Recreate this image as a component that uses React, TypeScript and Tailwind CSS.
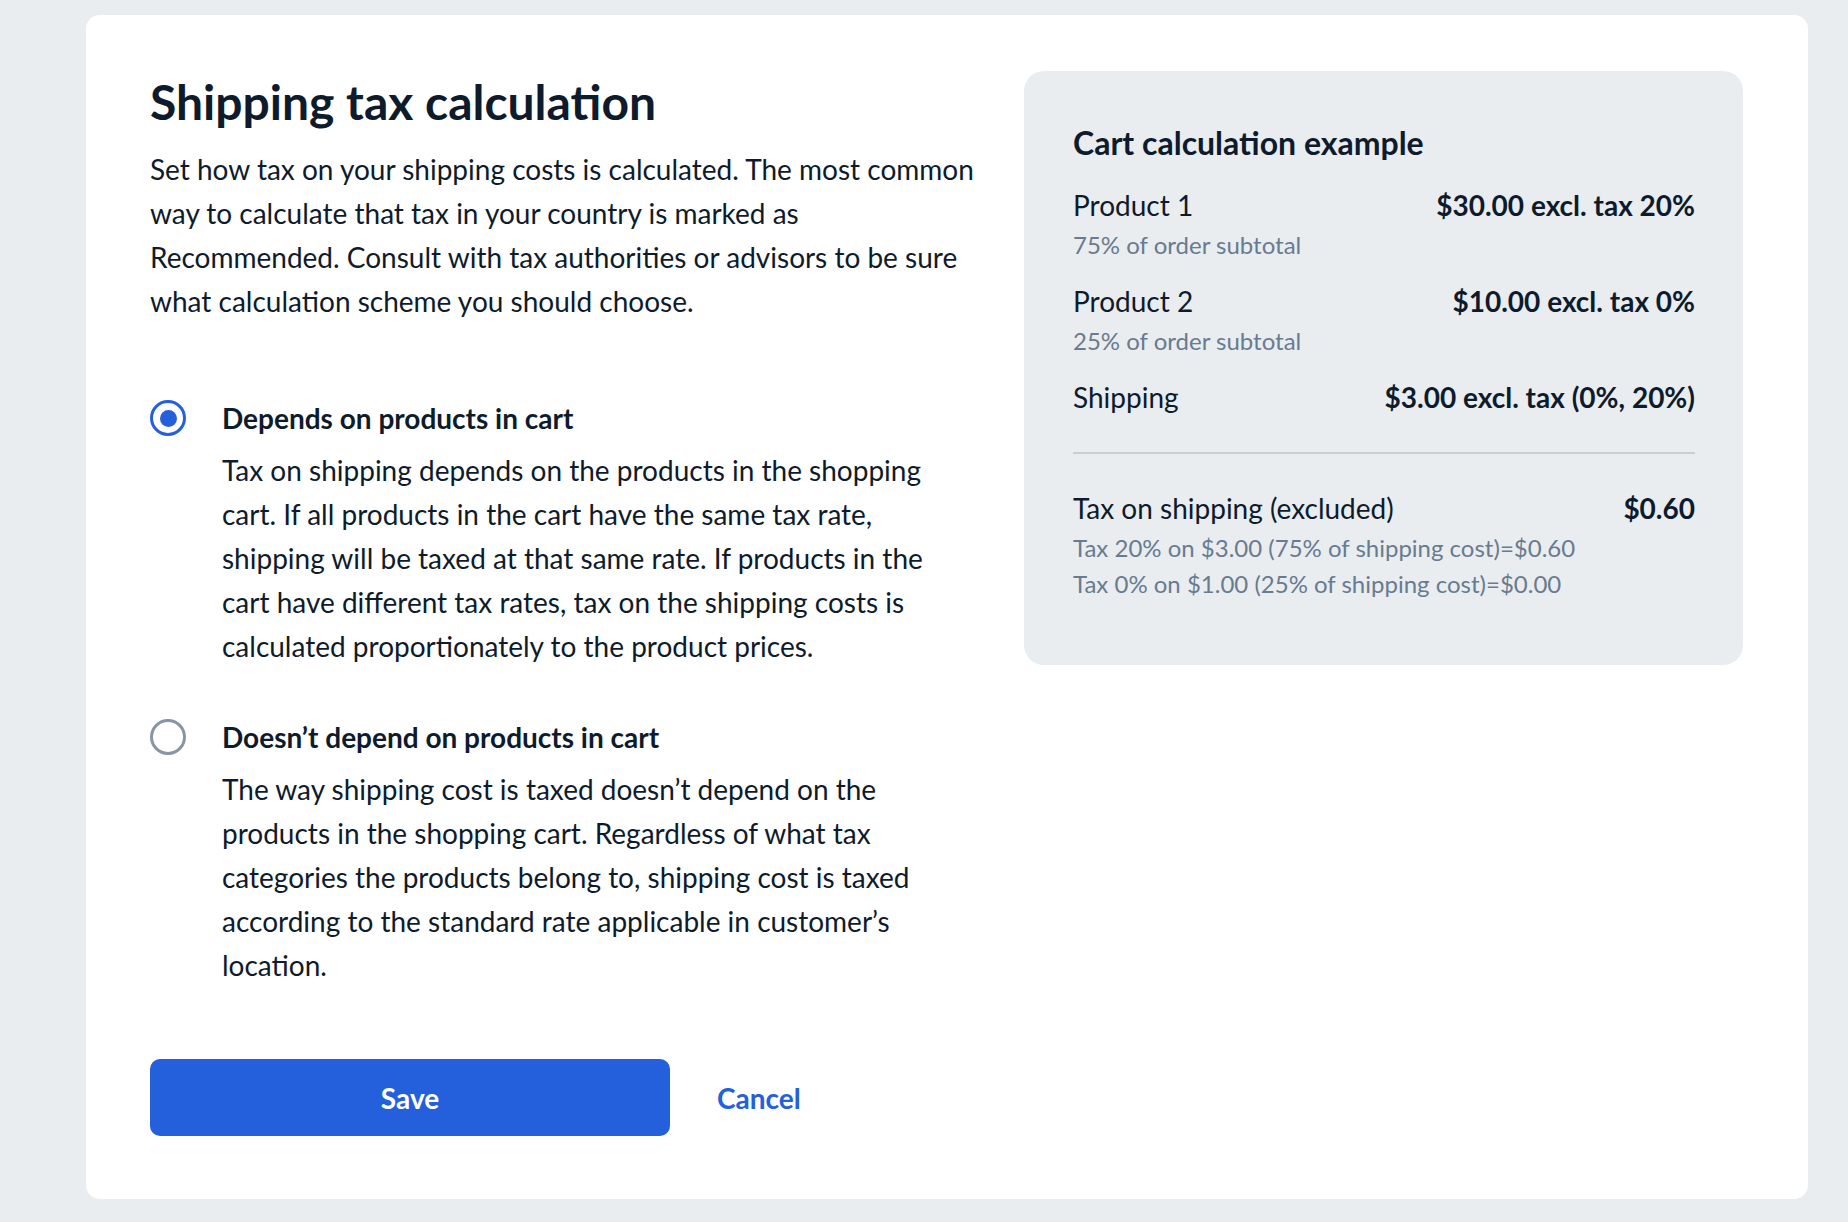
import { useState } from "react"

const font = { fontFamily: "Lato, 'Open Sans', sans-serif" }

type Opcao = { id: string; titulo: string; texto: string }

const opcoes: Opcao[] = [
  {
    id: "depends",
    titulo: "Depends on products in cart",
    texto:
      "Tax on shipping depends on the products in the shopping cart. If all products in the cart have the same tax rate, shipping will be taxed at that same rate. If products in the cart have different tax rates, tax on the shipping costs is calculated proportionately to the product prices.",
  },
  {
    id: "independent",
    titulo: "Doesn\u2019t depend on products in cart",
    texto:
      "The way shipping cost is taxed doesn\u2019t depend on the products in the shopping cart. Regardless of what tax categories the products belong to, shipping cost is taxed according to the standard rate applicable in customer\u2019s location.",
  },
]

function Radio({ checked }: { checked: boolean }) {
  return (
    <span
      className={`flex h-[36px] w-[36px] shrink-0 items-center justify-center rounded-full border-[3px] ${
        checked ? "border-[#2460db]" : "border-[#8795a4]"
      }`}
    >
      {checked && <span className="h-[17px] w-[17px] rounded-full bg-[#2460db]" />}
    </span>
  )
}

function Linha({ nome, valor, sub }: { nome: string; valor: string; sub?: string }) {
  return (
    <div>
      <div className="flex items-start justify-between text-[28px] leading-[36px]">
        <span>{nome}</span>
        <span className="font-bold">{valor}</span>
      </div>
      {sub && <div className="mt-[6px] text-[24px] leading-[32px] text-[#687b8f]">{sub}</div>}
    </div>
  )
}

export default function App() {
  const [escolha, setEscolha] = useState("depends")

  return (
    <div className="min-h-screen bg-[#e9edf0] pb-[24px] pl-[86px] pr-[40px] pt-[15px] text-[#0e1b2c]" style={font}>
      <div className="flex gap-[48px] rounded-[14px] bg-white pb-[63px] pl-[64px] pr-[65px] pt-[56px]">
        {/* Coluna esquerda */}
        <div className="w-[826px] shrink-0 pt-[3px]">
          <h1 className="text-[48px] font-bold leading-[56px]">Shipping tax calculation</h1>
          <p className="mt-[17px] text-[28px] leading-[44px]">
            Set how tax on your shipping costs is calculated. The most common way to calculate that tax in your country
            is marked as Recommended. Consult with tax authorities or advisors to be sure what calculation scheme you
            should choose.
          </p>

          <div className="mt-[73px] flex flex-col gap-[47px]">
            {opcoes.map((o) => (
              <label key={o.id} className="flex cursor-pointer gap-[36px]" onClick={() => setEscolha(o.id)}>
                <span className="flex h-[44px] items-center">
                  <Radio checked={escolha === o.id} />
                </span>
                <span className="block">
                  <span className="block text-[28px] font-bold leading-[44px]">{o.titulo}</span>
                  <span className="mt-[8px] block text-[28px] leading-[44px]">{o.texto}</span>
                </span>
              </label>
            ))}
          </div>

          <div className="mt-[72px] flex items-center gap-[47px]">
            <button className="h-[77px] w-[520px] rounded-[10px] bg-[#2460db] text-[28px] font-bold text-white">
              Save
            </button>
            <button className="text-[28px] font-bold text-[#2460db]">Cancel</button>
          </div>
        </div>

        {/* Exemplo do carrinho */}
        <div className="h-fit w-[719px] shrink-0 rounded-[20px] bg-[#e9edf0] pb-[63px] pl-[49px] pr-[48px] pt-[52px]">
          <h2 className="text-[32px] font-bold leading-[40px]">Cart calculation example</h2>
          <div className="mt-[24px] flex flex-col gap-[22px]">
            <Linha nome="Product 1" valor="$30.00 excl. tax 20%" sub="75% of order subtotal" />
            <Linha nome="Product 2" valor="$10.00 excl. tax 0%" sub="25% of order subtotal" />
            <Linha nome="Shipping" valor="$3.00 excl. tax (0%, 20%)" />
          </div>
          <div className="mt-[37px] h-[2px] bg-[#c6ced6]" />
          <div className="mt-[36px] flex items-start justify-between text-[28px] leading-[36px]">
            <span>Tax on shipping (excluded)</span>
            <span className="font-bold">$0.60</span>
          </div>
          <div className="mt-[4px] text-[24px] leading-[36px] text-[#687b8f]">
            <div>Tax 20% on $3.00 (75% of shipping cost)=$0.60</div>
            <div>Tax 0% on $1.00 (25% of shipping cost)=$0.00</div>
          </div>
        </div>
      </div>
    </div>
  )
}
